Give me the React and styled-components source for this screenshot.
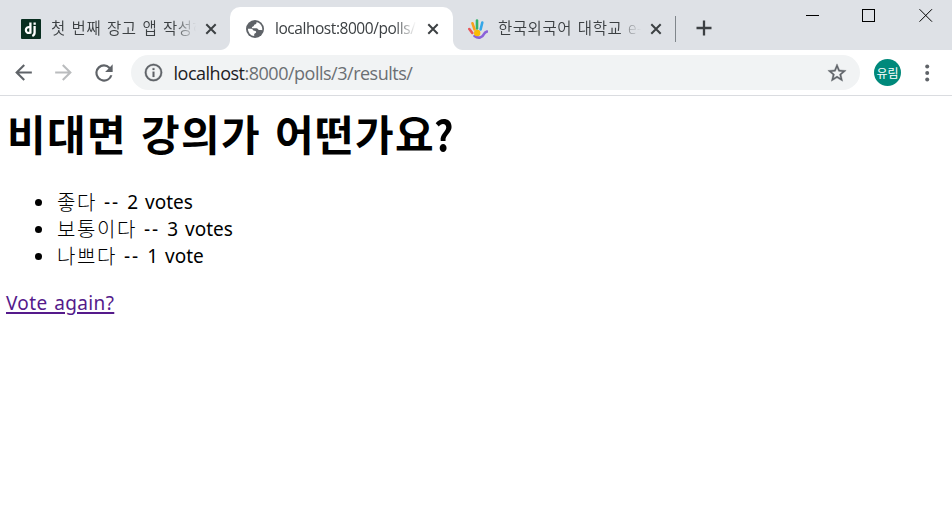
import React from "react";
import styled, { createGlobalStyle } from "styled-components";

const Global = createGlobalStyle`
  * { box-sizing: border-box; }
  body { margin: 0; background: #fff; overflow: hidden; }
`;

const Window = styled.div`
  display: flex;
  flex-direction: column;
  width: 952px;
  height: 532px;
  background: #fff;
  color: #000;
  font-family: "Open Sans", "Noto Sans CJK KR", sans-serif;
`;

const TabStrip = styled.header`
  display: flex;
  height: 50px;
  background: #dee1e6;
`;

const Tab = styled.div`
  position: relative;
  display: flex;
  align-items: center;
  width: ${(p) => p.$width}px;
  height: 43px;
  margin-top: 7px;
  padding-left: ${(p) => p.$inset}px;
  border-radius: 10px 10px 0 0;
  background: ${(p) => (p.$active ? "#fff" : "transparent")};
  &::before,
  &::after {
    content: "";
    display: ${(p) => (p.$active ? "block" : "none")};
    position: absolute;
    bottom: 0;
    width: 10px;
    height: 10px;
  }
  &::before {
    left: -10px;
    background: radial-gradient(circle at 0 0, transparent 9.5px, #fff 10.5px);
  }
  &::after {
    right: -10px;
    background: radial-gradient(circle at 100% 0, transparent 9.5px, #fff 10.5px);
  }
`;

const TabIcon = styled.svg`
  flex: none;
  display: block;
  width: 20px;
  height: 20px;
`;

const TabTitle = styled.div`
  flex: none;
  width: ${(p) => p.$width}px;
  height: 24px;
  margin-left: ${(p) => p.$gap}px;
  margin-top: -1px;
  overflow: hidden;
  white-space: nowrap;
  line-height: 24px;
  font-size: ${(p) => p.$size}px;
  font-weight: ${(p) => p.$weight};
  letter-spacing: ${(p) => p.$track}px;
  word-spacing: ${(p) => p.$word || 0}px;
  color: #3c4043;
  mask-image: linear-gradient(to right, #000 calc(100% - 22px), transparent);
`;

const CloseIcon = styled.svg`
  flex: none;
  display: block;
  width: 12px;
  height: 12px;
  margin-left: ${(p) => p.$gap}px;
`;

const Divider = styled.div`
  width: 1px;
  height: 26px;
  margin: 16px 0 0 -1px;
  background: #80868b;
`;

const NewTab = styled.svg`
  width: 16px;
  height: 16px;
  margin: 20px 0 0 19.5px;
`;

const WindowButtons = styled.div`
  display: flex;
  gap: 43px;
  margin: 9px 19px 0 auto;
`;

const WindowIcon = styled.svg`
  width: 14px;
  height: 13px;
`;

const Toolbar = styled.nav`
  display: flex;
  align-items: center;
  height: 46px;
  padding-left: 11px;
  border-bottom: 1px solid #dadce0;
`;

const NavIcon = styled.svg`
  flex: none;
  display: block;
  width: ${(p) => p.$size}px;
  height: ${(p) => p.$size}px;
  margin-left: ${(p) => p.$gap || 0}px;
  fill: ${(p) => (p.$dim ? "#babcbe" : "#5f6368")};
`;

const AddressBar = styled.div`
  display: flex;
  align-items: center;
  width: 729px;
  height: 35px;
  margin-left: 14px;
  padding: 0 12px 0 12px;
  border-radius: 18px;
  background: #f1f3f4;
`;

const Url = styled.div`
  flex: 1;
  margin-left: 9.5px;
  font-size: 18px;
  line-height: 30px;
  letter-spacing: -0.49px;
  color: #6b6f73;
  white-space: nowrap;
`;

const Host = styled.span`
  color: #202124;
`;

const Avatar = styled.div`
  display: flex;
  align-items: center;
  justify-content: center;
  width: 27px;
  height: 27px;
  margin-left: 14px;
  border-radius: 50%;
  background: #00897b;
  color: #fff;
  font: 400 12px/27px "Noto Sans CJK KR", sans-serif;
`;

const Page = styled.main`
  padding: 0 6px;
`;

const Question = styled.h1`
  height: 60px;
  margin: 7px 0 25px 1px;
  font: 700 42px/60px "Noto Sans CJK KR", sans-serif;
  letter-spacing: 1.35px;
  word-spacing: 3.2px;
  white-space: nowrap;
`;

const Mark = styled.span`
  display: inline-block;
  margin-left: -1px;
  transform: scaleX(0.9);
  transform-origin: left;
`;

const Results = styled.ul`
  margin: 0;
  padding: 0;
  list-style: none;
`;

const Choice = styled.li`
  display: flex;
  align-items: center;
  height: 27px;
  padding-left: 29px;
  font-size: 19px;
  line-height: 27px;
  white-space: pre;
  &::before {
    content: "";
    width: 7px;
    height: 7px;
    margin: 2px 15px 0 0;
    border-radius: 50%;
    background: #000;
  }
`;

const Label = styled.span`
  font: 300 20px/27px "Noto Sans CJK KR", sans-serif;
  letter-spacing: 1.6px;
`;

const Count = styled.span`
  margin: 1px 0 0 7px;
  font-family: "Noto Sans", sans-serif;
  word-spacing: 2px;
`;

const Dashes = styled.span`
  letter-spacing: 2px;
`;

const Again = styled.a`
  display: inline-block;
  margin-top: 21px;
  font: 400 19px/27px "Noto Sans", sans-serif;
  letter-spacing: 0.35px;
  word-spacing: 1.5px;
  color: #551a8b;
  text-decoration: underline;
  text-decoration-thickness: 2px;
  text-underline-offset: 2px;
`;

const choices = [
  ["좋다", "2 votes"],
  ["보통이다", "3 votes"],
  ["나쁘다", "1 vote"],
];

const Close = ({ gap }) => (
  <CloseIcon $gap={gap} viewBox="0 0 12 12">
    <path d="M1.3 1.3l9.4 9.4M10.7 1.3l-9.4 9.4" stroke="#3c4043" strokeWidth="2" />
  </CloseIcon>
);

export default function App() {
  return (
    <Window>
      <Global />
      <TabStrip>
        <Tab $width={230} $inset={21}>
          <TabIcon viewBox="0 0 20 20">
            <rect width="20" height="20" rx="1" fill="#092e20" />
            <g fill="none" stroke="#fff" strokeWidth="2.3">
              <path d="M9.4 3.5v10.2c-2.3.6-4.5.3-4.5-2.6 0-2.600 2.100-3.400 4.500-2.700" />
              <path d="M13.600 7v6.500c0 2-.7 2.800-2.300 3.500" />
            </g>
            <path d="M12.500 3.500h2.300v2.300h-2.300z" fill="#fff" />
          </TabIcon>
          <TabTitle $width={145} $gap={10} $size={15.5} $weight={350} $track={0.55} $word={1.2}>
            첫 번째 장고 앱 작성하기
          </TabTitle>
          <Close gap={9} />
        </Tab>
        <Tab $active $width={223} $inset={15}>
          <TabIcon viewBox="0 0 20 20">
            <circle cx="10" cy="10" r="9" fill="#5f6368" />
            <path
              d="M11.500 3c.3 1.300-.4 2.300-1.700 2.500-.9.200-.6 1.100-1.300 1.700-.6.500-1.500.4-1.600 1.300 0 .7.500.8 1.200.8h3.400c1.300 0 1.400 1.500 2.400 1.700.9.200 1.700-.3 3.300.2A7.200 7.200 0 0 0 11.500 3zM2.900 9.800a7.200 7.200 0 0 0 6.300 7.300v-1.800c0-1.100 2-.8 2-2.300 0-1.100-1.100-1.200-2.200-1.300-1.500-.1-1-1.900-2.500-1.900z"
              fill="#fff"
            />
          </TabIcon>
          <TabTitle $width={141} $gap={10} $size={15.5} $weight={400} $track={-0.45}>
            localhost:8000/polls/3
          </TabTitle>
          <Close gap={11} />
        </Tab>
        <Tab $width={223} $inset={15}>
          <TabIcon viewBox="0 0 20 20">
            <g fill="none" strokeLinecap="round" strokeWidth="2.600">
              <path d="M9 1.500v8" stroke="#34b36b" />
              <path d="M4.500 4.300l2 6" stroke="#f9a01b" />
              <path d="M14.300 3.500l-1.700 7" stroke="#35a7e8" />
              <path d="M1.300 10l3 4" stroke="#e9585a" />
              <path d="M6.500 17c4 3 8 1.500 9.500-2 .7-1.500 1.500-2 3-2.500" stroke="#8b62d9" />
            </g>
            <circle cx="9.200" cy="14" r="3.200" fill="#fbbc05" />
          </TabIcon>
          <TabTitle $width={143} $gap={10} $size={15.5} $weight={350} $track={0.55} $word={1.2}>
            한국외국어 대학교 e-Class
          </TabTitle>
          <Close gap={9} />
        </Tab>
        <Divider />
        <NewTab viewBox="0 0 16 16">
          <path d="M8 .5v15M.5 8h15" stroke="#3c4043" strokeWidth="2.300" />
        </NewTab>
        <WindowButtons>
          <WindowIcon viewBox="0 0 14 13" shapeRendering="crispEdges">
            <path d="M1 6.500h13" stroke="#000" />
          </WindowIcon>
          <WindowIcon viewBox="0 0 14 13" shapeRendering="crispEdges">
            <path d="M.5.5h12v12H.5z" fill="none" stroke="#000" />
          </WindowIcon>
          <WindowIcon viewBox="0 0 14 13">
            <path d="M.5.2l12.500 12.500M13 .2L.5 12.700" stroke="#000" />
          </WindowIcon>
        </WindowButtons>
      </TabStrip>
      <Toolbar>
        <NavIcon $size={25} viewBox="0 0 24 24">
          <path d="M20 11H7.830l5.590-5.590L12 4l-8 8 8 8 1.410-1.410L7.830 13H20v-2z" />
        </NavIcon>
        <NavIcon $size={25} $gap={15} $dim viewBox="0 0 24 24">
          <path d="M12 4l-1.410 1.410L16.170 11H4v2h12.170l-5.580 5.590L12 20l8-8z" />
        </NavIcon>
        <NavIcon $size={26} $gap={15} viewBox="0 0 24 24">
          <path d="M17.650 6.350A7.958 7.958 0 0 0 12 4a8 8 0 1 0 7.730 10h-2.080A5.990 5.990 0 0 1 12 18a6 6 0 1 1 0-12c1.660 0 3.140.69 4.220 1.780L13 11h7V4l-2.350 2.350z" />
        </NavIcon>
        <AddressBar>
          <NavIcon $size={21} viewBox="0 0 24 24">
            <path
              stroke="#5f6368"
              strokeWidth=".3"
              d="M11 7h2v2h-2zm0 4h2v6h-2zm1-9a10 10 0 1 0 0 20 10 10 0 0 0 0-20zm0 18a8 8 0 1 1 0-16 8 8 0 0 1 0 16z"
            />
          </NavIcon>
          <Url>
            <Host>localhost</Host>:8000/polls/3/results/
          </Url>
          <NavIcon $size={22} viewBox="0 0 24 24">
            <path stroke="#5f6368" strokeWidth=".4" d="M22 9.240l-7.190-.62L12 2 9.190 8.630 2 9.240l5.460 4.730L5.820 21 12 17.270 18.180 21l-1.630-7.030L22 9.240zM12 15.400l-3.760 2.270 1-4.280-3.320-2.880 4.380-.38L12 6.100l1.710 4.040 4.380.38-3.320 2.880 1 4.280L12 15.400z" />
          </NavIcon>
        </AddressBar>
        <Avatar>유림</Avatar>
        <NavIcon $size={24} $gap={14} viewBox="0 0 24 24">
          <circle cx="12.200" cy="5.500" r="2" />
          <circle cx="12.200" cy="12" r="2" />
          <circle cx="12.200" cy="18.500" r="2" />
        </NavIcon>
      </Toolbar>
      <Page>
        <Question>
          비대면 강의가 어떤가요<Mark>?</Mark>
        </Question>
        <Results>
          {choices.map(([label, count]) => (
            <Choice key={label}>
              <Label>{label}</Label>
              <Count>
                <Dashes>--</Dashes> {count}
              </Count>
            </Choice>
          ))}
        </Results>
        <Again>Vote again?</Again>
      </Page>
    </Window>
  );
}
